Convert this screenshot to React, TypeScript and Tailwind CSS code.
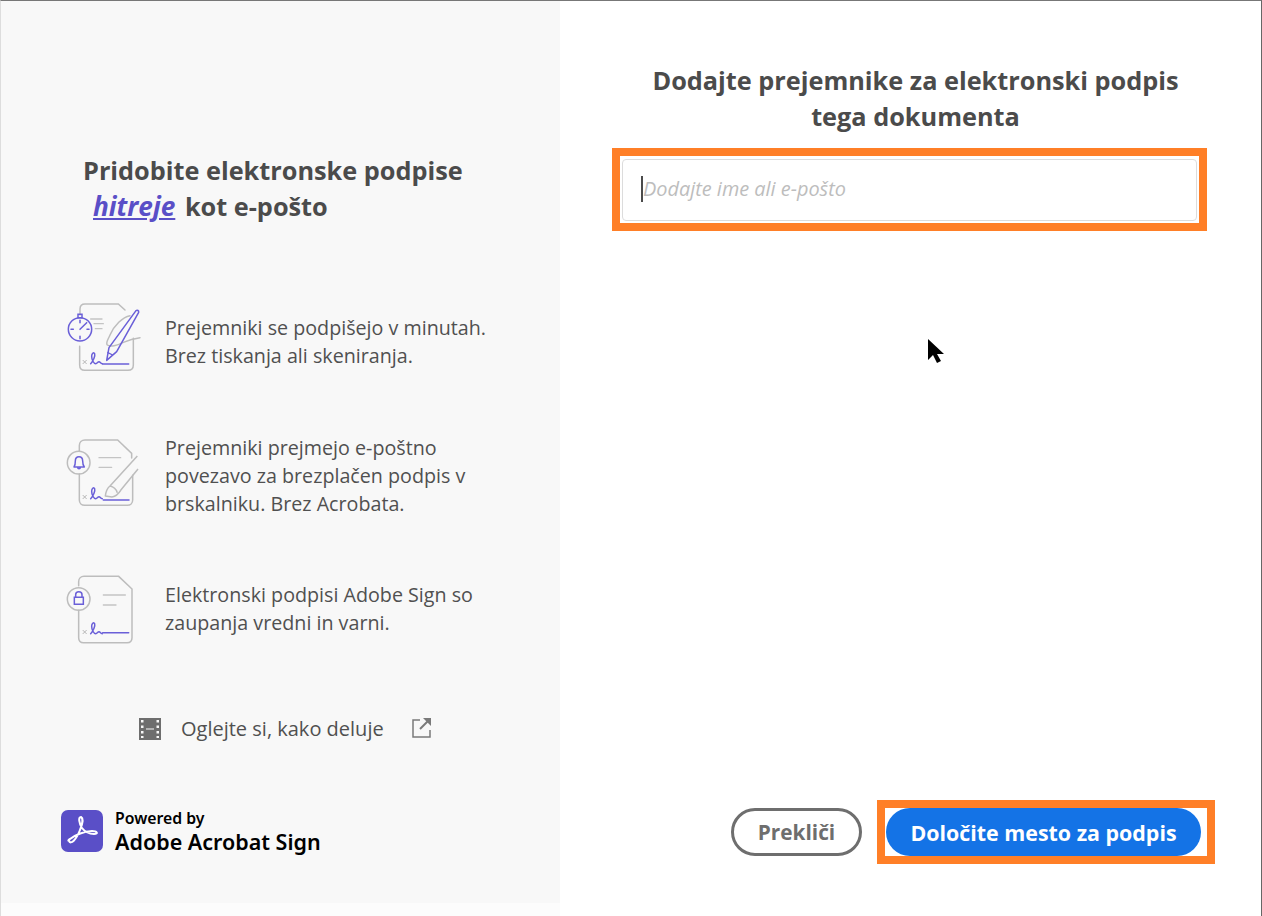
import { ReactNode } from 'react'

const SANS = "font-['Open_Sans','Noto_Sans',sans-serif]"

function Signature() {
  return (
    <g fill="none" strokeLinecap="round">
      <path d="M99 196l10 10M109 196l-10 10" stroke="#b5b5b5" strokeWidth="3" />
      <path d="M122 206c8-8 14-24 12-30-2-5-9-2-9 8 0 10 6 22 12 22 5 0 6-6 10-6 4 0 4 6 10 6" stroke="#6a5fd8" strokeWidth="4.5" />
    </g>
  )
}

function PenIcon() {
  return (
    <svg width="100" height="90" viewBox="0 0 300 270" fill="none">
      <path d="M90 60V42c0-9 6-15 15-15h100l20 18M250 130v80c0 10-6 16-16 16H104c-9 0-15-6-15-16v-56" stroke="#bdbdbd" strokeWidth="4.5" strokeLinecap="round" />
      <path d="M122 72h34M132 86h28M136 101h20" stroke="#c4c4c4" strokeWidth="4" strokeLinecap="round" />
      <path d="M240 62c-22 4-48 30-60 58-6 14-14 24-8 30 8 6 30 2 48-8 18-8 34-12 50-14" stroke="#bdbdbd" strokeWidth="4.5" strokeLinecap="round" />
      <circle cx="90" cy="103" r="35" stroke="#6a5fd8" strokeWidth="4.5" />
      <path d="M84 58h12v10H84zM90 103l20-20M90 76v7M90 124v7M63 103h7M111 103h6" stroke="#6a5fd8" strokeWidth="4.5" strokeLinecap="round" />
      <path d="M258 47c4-3 9 0 8 5l-66 118-30 26 7-38z" stroke="#6a5fd8" strokeWidth="4.5" strokeLinejoin="round" />
      <path d="M172 172l16 8" stroke="#6a5fd8" strokeWidth="4" />
      <Signature />
      <path d="M158 207h78" stroke="#6a5fd8" strokeWidth="4.5" strokeLinecap="round" />
    </svg>
  )
}

function BellIcon() {
  return (
    <svg width="100" height="90" viewBox="0 0 300 270" fill="none">
      <path d="M88 62V47c0-10 7-17 17-17h98l42 40v14M248 136v74c0 10-7 16-16 16H104c-9 0-16-6-16-16v-78" stroke="#bdbdbd" strokeWidth="4.5" strokeLinecap="round" />
      <path d="M147 83h65M147 112h38" stroke="#c4c4c4" strokeWidth="4" strokeLinecap="round" />
      <circle cx="86" cy="98" r="34" stroke="#bdbdbd" strokeWidth="4.5" />
      <path d="M72 111c4-5 4-10 4-18 0-7 4-13 11-13s11 6 11 13c0 8 1 13 5 18zM83 112c0 6 8 6 8 0" stroke="#6a5fd8" strokeWidth="4.5" strokeLinejoin="round" />
      <path d="M262 78l-82 90c-8 6-12 14-14 30l20 3c12-2 20-10 26-20l52-64M180 168c10 2 18 8 22 20" stroke="#bdbdbd" strokeWidth="4.5" strokeLinejoin="round" />
      <Signature />
      <path d="M160 210h77" stroke="#6a5fd8" strokeWidth="4.5" strokeLinecap="round" />
    </svg>
  )
}

function LockIcon() {
  return (
    <svg width="100" height="90" viewBox="0 0 300 270" fill="none">
      <path d="M86 62V50c0-10 7-16 16-16h104l40 38v146c0 9-6 15-15 15H101c-9 0-15-6-15-15v-82" stroke="#bdbdbd" strokeWidth="4.5" strokeLinecap="round" />
      <path d="M160 90h66M160 120h38" stroke="#c4c4c4" strokeWidth="4" strokeLinecap="round" />
      <circle cx="86" cy="102" r="34" stroke="#bdbdbd" strokeWidth="4.5" />
      <path d="M73 97h27v21H73zM77 97v-8c0-12 19-12 19 0v8" stroke="#6a5fd8" strokeWidth="4.5" />
      <Signature />
      <path d="M158 203h78" stroke="#6a5fd8" strokeWidth="4.5" strokeLinecap="round" />
    </svg>
  )
}

function Benefit({ icon, className, children }: { icon: ReactNode; className?: string; children: ReactNode }) {
  return (
    <div className="flex h-[90px] items-center">
      <div className="w-[100px] shrink-0">{icon}</div>
      <p className={`ml-[15px] w-[335px] text-[19.7px] leading-[28px] text-[#505050] ${className ?? ''}`}>{children}</p>
    </div>
  )
}

export default function App() {
  return (
    <div className={`relative flex h-[916px] w-[1262px] overflow-hidden border-t border-r border-l border-t-[#777] border-r-[#666] border-l-[#ddd] bg-white ${SANS}`}>
      {/* left panel */}
      <div className="h-full w-[559px] shrink-0 bg-[#fcfcfc]">
        <div className="flex h-[902px] flex-col bg-[#f8f8f8] pl-[49px]">
          <h2 className="mt-[151px] ml-[33px] text-[25.3px] leading-[36px] font-bold whitespace-nowrap text-[#4b4b4b]">
            Pridobite elektronske podpise
            <br />
            <a className="mr-[3px] ml-[10px] text-[26.2px] text-[#5a4fc7] italic underline">hitreje</a> kot e-pošto
          </h2>

          <div className="mt-[71px] flex flex-col gap-[45px]">
            <Benefit icon={<PenIcon />} className="pt-1">
              Prejemniki se podpišejo v minutah.
              <br />
              Brez tiskanja ali skeniranja.
            </Benefit>
            <Benefit icon={<BellIcon />} className="pt-[2px]">
              Prejemniki prejmejo e-poštno
              <br />
              povezavo za brezplačen podpis v
              <br />
              brskalniku. Brez Acrobata.
            </Benefit>
            <Benefit icon={<LockIcon />} className="pb-[2px]">
              Elektronski podpisi Adobe Sign so
              <br />
              zaupanja vredni in varni.
            </Benefit>
          </div>

          <div className="mt-[60px] ml-[89px] flex items-center">
            <svg width="22" height="22" viewBox="0 0 22 22" fill="#6e6e6e">
              <path fillRule="evenodd" d="M0 0h22v22H0zM2 2v2.500h2.500V2zm0 5.500V10h2.500V7.500zM2 13v2.500h2.500V13zm0 5v2h2.500v-2zM17.500 2v2.500H20V2zm0 5.500V10H20V7.500zm0 5.500v2.500H20V13zm0 5v2H20v-2zM7 10.500v1h8v-1z" />
            </svg>
            <span className="ml-[20px] text-[20px] leading-[28px] text-[#505050]">Oglejte si, kako deluje</span>
            <svg className="mb-[3px] ml-[28px]" width="20" height="21" viewBox="0 0 20 21" fill="none" stroke="#7a7a7a" strokeWidth="1.500">
              <path d="M8 3H1v17h17v-7" />
              <path d="M8 12l10-10" strokeWidth="2" />
              <path d="M11 1h8v8z" fill="#7a7a7a" stroke="none" />
            </svg>
          </div>

          <div className="mt-[62px] ml-[11px] flex items-center">
            <div className="flex size-[42px] items-center justify-center rounded-[7px] bg-[#5a4fc7]">
              <svg width="42" height="42" viewBox="0 0 42 42" fill="none">
                <path d="M8 31c2 4 7-1 11-11 3-7 3-12 1-13-3 0-2 6 1 11 3 4 7 6 12 6 5 0 3-3-2-3-7 0-17 4-22 8-2 1-2 2-1 2z" stroke="#fff" strokeWidth="2" strokeLinejoin="round" />
              </svg>
            </div>
            <div className="mt-1 ml-[12px] font-['Noto_Sans',sans-serif] text-black">
              <div className="text-[15.8px] leading-[18px] font-semibold">Powered by</div>
              <div className="text-[21.5px] leading-[29px] font-semibold">Adobe Acrobat Sign</div>
            </div>
          </div>
        </div>
      </div>

      {/* right panel */}
      <div className="flex h-full flex-1 flex-col pt-[61px]">
        <h1 className="ml-[58px] w-[595px] text-center text-[25.3px] leading-[36px] font-bold whitespace-nowrap text-[#4b4b4b]">
          Dodajte prejemnike za elektronski podpis
          <br />
          tega dokumenta
        </h1>

        <div className="mt-[14px] ml-[52px] h-[83px] w-[595px] border-[8px] border-[#ff7f27] bg-white px-[2px] pt-[3px]">
          <div className="relative h-[62px] w-[575px] rounded-[4px] border border-[#dcdcdc]">
            <input
              readOnly
              placeholder="Dodajte ime ali e-pošto"
              className="h-full w-full bg-transparent pb-1 pl-[20px] text-[19.9px] outline-none placeholder:text-[#bdbdbd] placeholder:italic"
            />
            <span className="absolute top-[16px] left-[18px] h-[26px] w-[2px] bg-[#4b4b4b]" />
          </div>
        </div>

        <div className="mt-[569px] ml-[171px] flex items-center">
          <button className="h-[48px] w-[131px] rounded-full border-[3px] border-[#6e6e6e] pt-[2px] text-[20.8px] font-bold text-[#6e6e6e]">
            Prekliči
          </button>
          <div className="ml-[15px] h-[64px] w-[338px] border-[8px] border-[#ff7f27] bg-white pl-px">
            <button className="h-[48px] w-[315px] rounded-full bg-[#1473e6] pt-[2px] text-[21.4px] font-bold text-white">
              Določite mesto za podpis
            </button>
          </div>
        </div>
      </div>

      {/* mouse pointer */}
      <svg className="absolute top-[337px] left-[926px]" width="18" height="26" viewBox="0 0 18 26" fill="#000">
        <path d="M1 1v21l5-5 4 8 4-2-4-7h7z" />
      </svg>
    </div>
  )
}
